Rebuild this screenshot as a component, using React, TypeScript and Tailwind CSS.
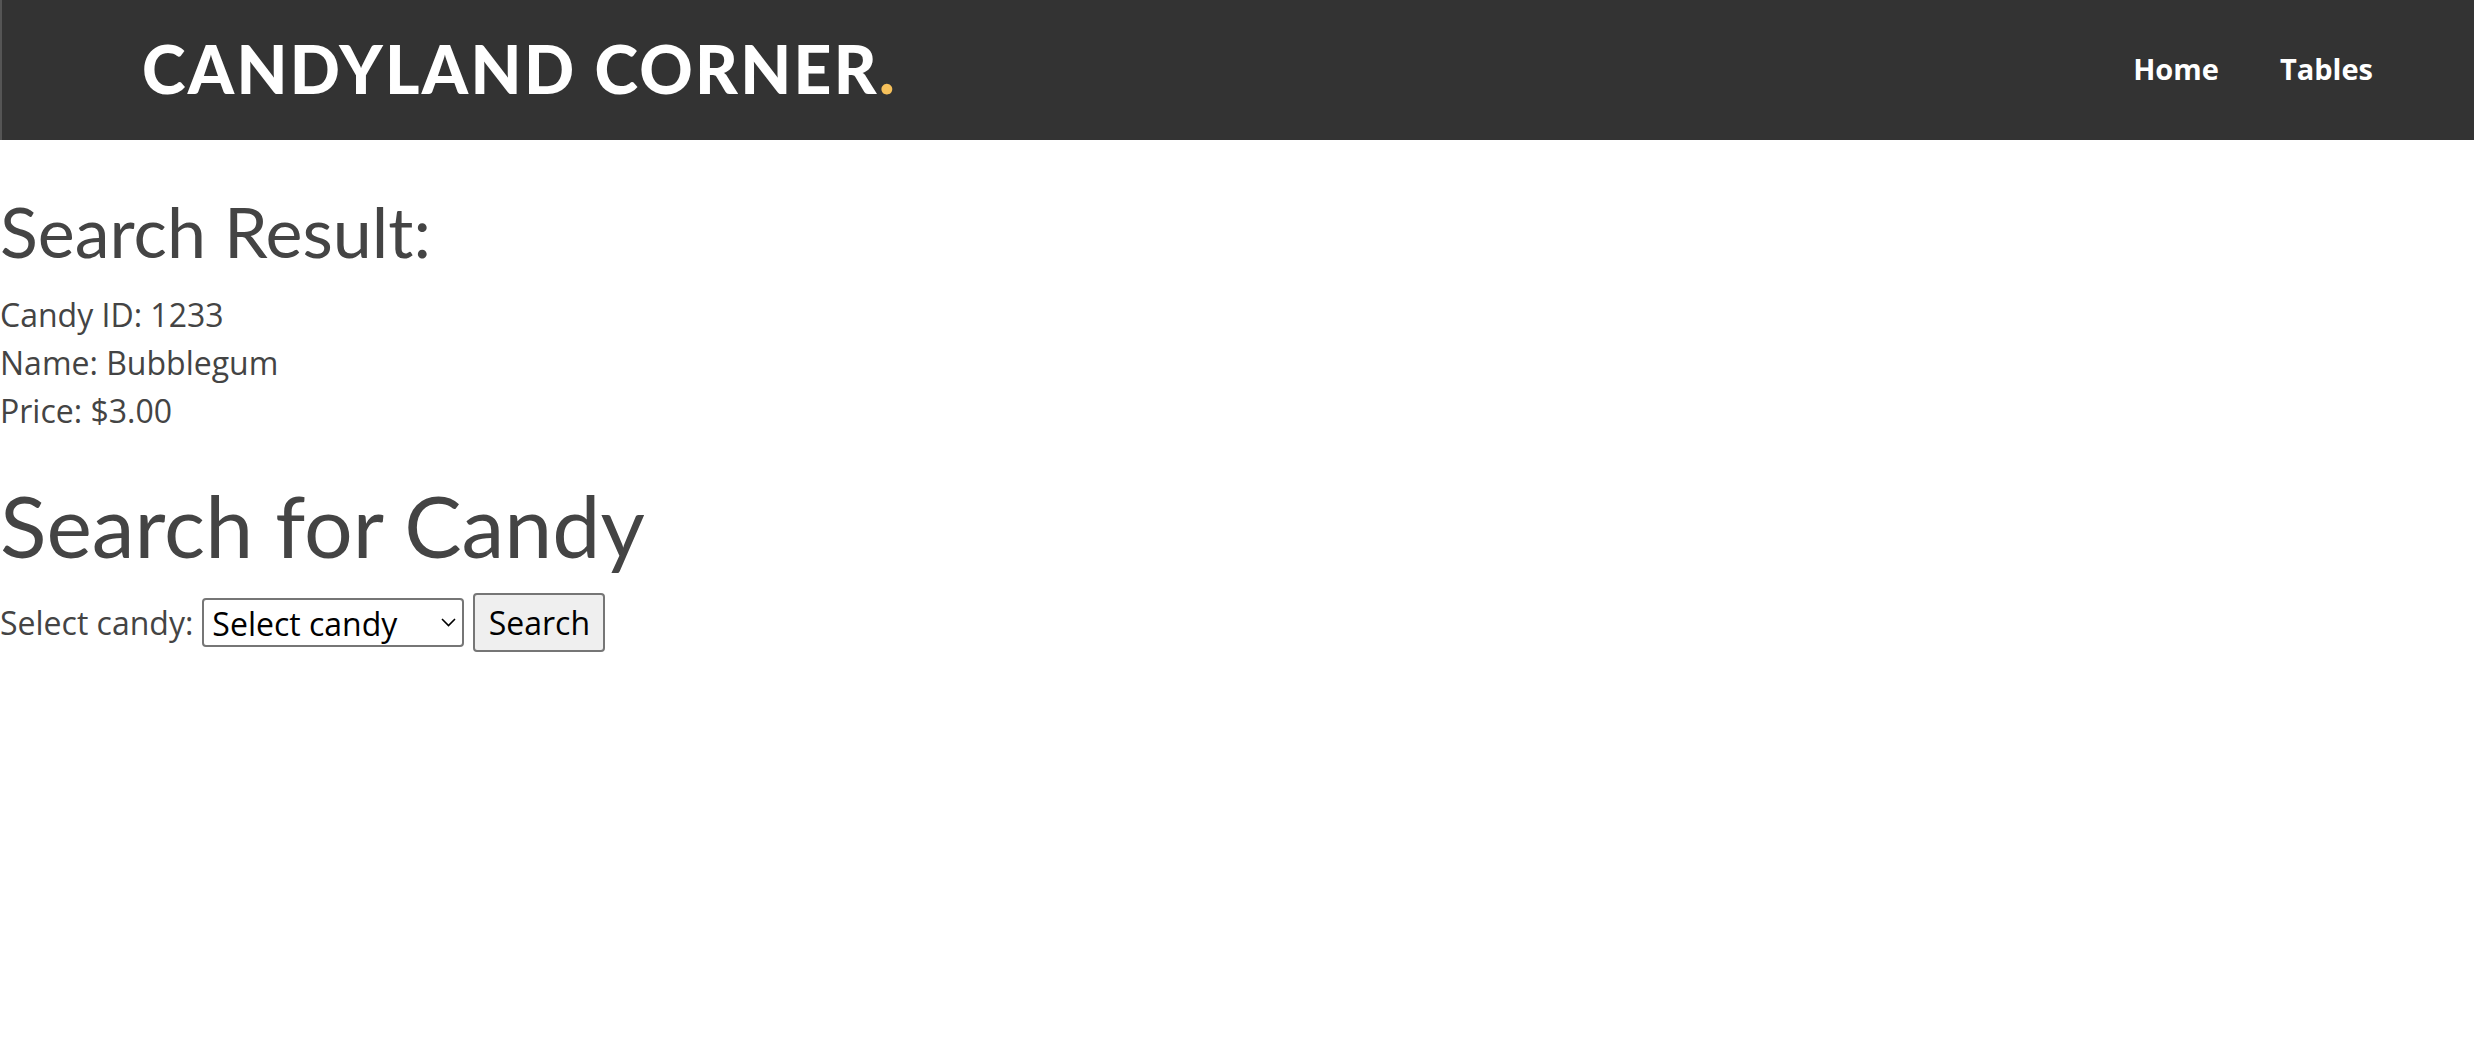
import { useState } from "react";

const candies = ["Bubblegum", "Lollipop", "Gummy Bears", "Chocolate Bar"];

export default function App() {
  const [choice, setChoice] = useState("");

  return (
    <div className="min-h-screen bg-white font-['Open_Sans',sans-serif] text-[#444]">
      {/* Top bar */}
      <header className="flex h-[140px] items-center justify-between border-l-2 border-[#555] bg-[#333] pl-[140px] pr-[101px]">
        <a
          href="#"
          className="-mt-[2px] font-['Lato',sans-serif] text-[66px] font-black uppercase leading-none tracking-[0.035em] text-white"
        >
          Candyland Corner<span className="text-[#f6c15b]">.</span>
        </a>
        <nav className="-mt-[2px] flex gap-[61px] text-[29px] font-bold text-white">
          <a href="#">Home</a>
          <a href="#">Tables</a>
        </nav>
      </header>

      <main>
        <h2 className="mt-[48px] font-['Lato',sans-serif] text-[70px] leading-[86px] font-normal">
          Search Result:
        </h2>
        <div className="mt-[17px] text-[32px] leading-[48px]">
          <p>Candy ID: 1233</p>
          <p>Name: Bubblegum</p>
          <p>Price: $3.00</p>
        </div>

        <h1 className="mt-[36px] font-['Lato',sans-serif] text-[86px] leading-[108px] font-normal">
          Search for Candy
        </h1>
        <form
          className="mt-[14px] flex items-center gap-[9px] text-[32px]"
          onSubmit={(e) => e.preventDefault()}
        >
          <label htmlFor="candy">Select candy:</label>
          <div className="relative">
            <select
              id="candy"
              value={choice}
              onChange={(e) => setChoice(e.target.value)}
              className="h-[49px] w-[262px] appearance-none rounded-[4px] border-2 border-[#767676] bg-white pl-[8px] text-[32px] text-black"
            >
              <option value="">Select candy</option>
              {candies.map((c) => (
                <option key={c} value={c}>
                  {c}
                </option>
              ))}
            </select>
            <svg
              className="pointer-events-none absolute right-[8px] top-[20px] h-[9px] w-[15px] text-black"
              viewBox="0 0 15 9"
              fill="none"
            >
              <path d="M1 1l6.5 6.5L14 1" stroke="currentColor" strokeWidth="1.6" />
            </svg>
          </div>
          <button
            type="submit"
            className="h-[59px] w-[132px] rounded-[4px] border-2 border-[#767676] bg-[#efefef] text-[32px] text-black"
          >
            Search
          </button>
        </form>
      </main>
    </div>
  );
}
